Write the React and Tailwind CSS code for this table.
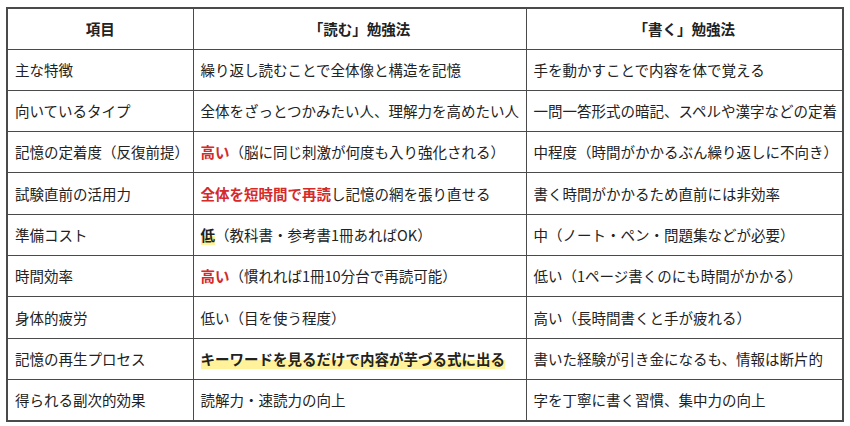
const rows = [
  {
    item: "主な特徴",
    read: <>繰り返し読むことで全体像と構造を記憶</>,
    write: "手を動かすことで内容を体で覚える",
  },
  {
    item: "向いているタイプ",
    read: <>全体をざっとつかみたい人、理解力を高めたい人</>,
    write: "一問一答形式の暗記、スペルや漢字などの定着",
  },
  {
    item: "記憶の定着度（反復前提）",
    read: (
      <>
        <span className="font-bold text-[#d42a2a]">高い</span>（脳に同じ刺激が何度も入り強化される）
      </>
    ),
    write: "中程度（時間がかかるぶん繰り返しに不向き）",
  },
  {
    item: "試験直前の活用力",
    read: (
      <>
        <span className="font-bold text-[#d42a2a]">全体を短時間で再読</span>し記憶の網を張り直せる
      </>
    ),
    write: "書く時間がかかるため直前には非効率",
  },
  {
    item: "準備コスト",
    read: (
      <>
        <span className="font-bold bg-[linear-gradient(transparent_55%,#fff29a_55%)]">低</span>（教科書・参考書1冊あればOK）
      </>
    ),
    write: "中（ノート・ペン・問題集などが必要）",
  },
  {
    item: "時間効率",
    read: (
      <>
        <span className="font-bold text-[#d42a2a]">高い</span>（慣れれば1冊10分台で再読可能）
      </>
    ),
    write: "低い（1ページ書くのにも時間がかかる）",
  },
  {
    item: "身体的疲労",
    read: <>低い（目を使う程度）</>,
    write: "高い（長時間書くと手が疲れる）",
  },
  {
    item: "記憶の再生プロセス",
    read: (
      <span className="font-bold bg-[linear-gradient(transparent_55%,#fff29a_55%)]">
        キーワードを見るだけで内容が芋づる式に出る
      </span>
    ),
    write: "書いた経験が引き金になるも、情報は断片的",
  },
  {
    item: "得られる副次的効果",
    read: <>読解力・速読力の向上</>,
    write: "字を丁寧に書く習慣、集中力の向上",
  },
];

export default function App() {
  return (
    <div className="w-[850px] h-[426px] bg-white pt-[7px] pl-[6px] font-['Noto_Sans_CJK_JP','Noto_Sans',sans-serif] text-[14.5px] text-[#222]">
      <table className="w-[838px] table-fixed border-collapse border-2 border-[#4a4a4a]">
        <colgroup>
          <col className="w-[186px]" />
          <col className="w-[333px]" />
          <col />
        </colgroup>
        <thead>
          <tr className="h-[41px]">
            <th className="border border-[#4a4a4a] font-bold text-center">項目</th>
            <th className="border border-[#4a4a4a] font-bold text-center">「読む」勉強法</th>
            <th className="border border-[#4a4a4a] font-bold text-center">「書く」勉強法</th>
          </tr>
        </thead>
        <tbody>
          {rows.map((row, i) => (
            <tr key={i} className="h-[41.3px]">
              <td className="border border-[#4a4a4a] px-[7px] whitespace-nowrap">{row.item}</td>
              <td className="border border-[#4a4a4a] px-[7px] whitespace-nowrap">{row.read}</td>
              <td className="border border-[#4a4a4a] px-[7px] whitespace-nowrap">{row.write}</td>
            </tr>
          ))}
        </tbody>
      </table>
    </div>
  );
}
